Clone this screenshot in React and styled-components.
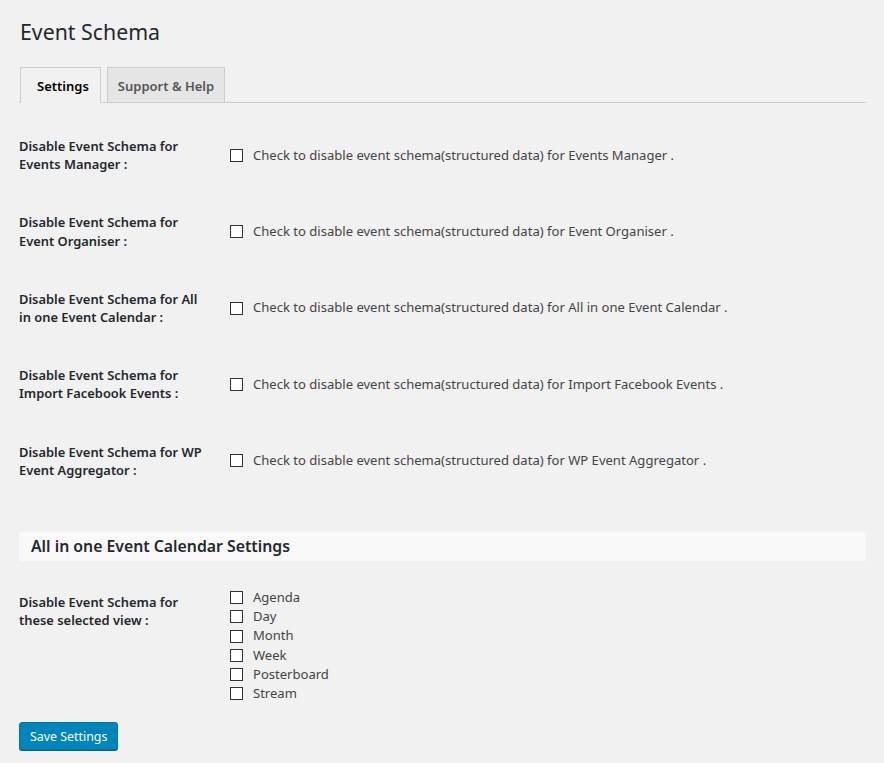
import styled, { createGlobalStyle } from "styled-components";

const GlobalStyle = createGlobalStyle`
    html, body {
        margin: 0;
        background: #f1f1f1;
    }
    body {
        font-family: "Noto Sans", "Open Sans", sans-serif;
        color: #444;
        font-size: 13px;
    }
`;

const PLUGINS = [
    ["Disable Event Schema for Events Manager :", "Events Manager"],
    ["Disable Event Schema for Event Organiser :", "Event Organiser"],
    ["Disable Event Schema for All in one Event Calendar :", "All in one Event Calendar"],
    ["Disable Event Schema for Import Facebook Events :", "Import Facebook Events"],
    ["Disable Event Schema for WP Event Aggregator :", "WP Event Aggregator"],
];

const VIEWS = ["Agenda", "Day", "Month", "Week", "Posterboard", "Stream"];

const Wrap = styled.div`
    padding: 17px 18px 20px 19px;
`;

const Title = styled.h1`
    margin: 0 0 21px 1px;
    font-size: 21.3px;
    line-height: 29px;
    font-weight: 400;
    color: #23282d;
`;

const TabBar = styled.div`
    display: flex;
    gap: 6px;
    padding-left: 1px;
    border-bottom: 1px solid #ccc;
    margin-bottom: 14px;
`;

const Tab = styled.div`
    padding: ${({ active }) => (active ? "2px 11px 0 16px" : "2px 10px 0")};
    height: 32px;
    line-height: 32px;
    font-size: 13px;
    font-weight: 600;
    border: 1px solid #ccc;
    margin-bottom: -1px;
    color: ${({ active }) => (active ? "#000" : "#555")};
    background: ${({ active }) => (active ? "#f1f1f1" : "#e5e5e5")};
    border-bottom-color: ${({ active }) => (active ? "#f1f1f1" : "#ccc")};
`;

const Row = styled.div`
    display: flex;
    align-items: ${({ top }) => (top ? "flex-start" : "center")};
    padding: ${({ top }) => (top ? "32px 0 19px" : "20px 0")};
`;

const Label = styled.div`
    width: 192px;
    margin-right: 19px;
    font-size: 12.9px;
    line-height: 18.2px;
    font-weight: 600;
    color: #23282d;
`;

const Field = styled.label`
    display: flex;
    align-items: center;
    gap: 10px;
    font-size: 13.05px;
    line-height: 19.2px;
    color: #444;
`;

const Box = styled.span`
    width: 11px;
    height: 11px;
    border: 1px solid #333;
    background: #fff;
    flex-shrink: 0;
`;

const List = styled.div`
    display: flex;
    flex-direction: column;
    margin-top: -5px;
`;

const SectionBar = styled.h2`
    margin: 33px 0 0;
    height: 29px;
    line-height: 29px;
    padding-left: 12px;
    background: #f9f9f9;
    font-size: 15.8px;
    font-weight: 600;
    color: #23282d;
`;

const SaveButton = styled.button`
    display: block;
    height: 28px;
    padding: 0 10px;
    font-family: inherit;
    font-size: 12.4px;
    color: #fff;
    background: #0085ba;
    border: 1px solid #0073aa;
    border-radius: 3px;
    box-shadow: 0 1px 0 #006799;
`;

const App = () => {
    return (
        <>
            <GlobalStyle />
            <Wrap>
                <Title>Event Schema</Title>
                <TabBar>
                    <Tab active>Settings</Tab>
                    <Tab>Support &amp; Help</Tab>
                </TabBar>
                {PLUGINS.map(([label, name]) => (
                    <Row key={name}>
                        <Label>{label}</Label>
                        <Field>
                            <Box />
                            Check to disable event schema(structured data) for {name} .
                        </Field>
                    </Row>
                ))}
                <SectionBar>All in one Event Calendar Settings</SectionBar>
                <Row top>
                    <Label>Disable Event Schema for these selected view :</Label>
                    <List>
                        {VIEWS.map((v) => (
                            <Field key={v}>
                                <Box />
                                {v}
                            </Field>
                        ))}
                    </List>
                </Row>
                <SaveButton>Save Settings</SaveButton>
            </Wrap>
        </>
    );
};

export default App;
